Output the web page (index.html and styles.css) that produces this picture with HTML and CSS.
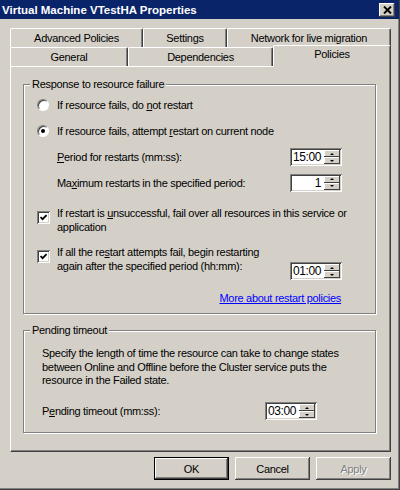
FILE: index.html
```html
<!DOCTYPE html>
<html lang="en">
<head>
    <meta charset="UTF-8">
    <title>Virtual Machine VTestHA Properties</title>
    <link rel="stylesheet" href="styles.css">
</head>
<body>

    <div class="window">
        <div class="titlebar">
            <span class="title">Virtual Machine VTestHA Properties</span>
            <span class="close">
                <svg width="9" height="8" viewBox="0 0 9 8"><path d="M1 0.5 L8 7.5 M8 0.5 L1 7.5" stroke="#000" stroke-width="1.9"/></svg>
            </span>
        </div>

        <div class="dialog">
            <!-- back row of tabs -->
            <div class="tab-row">
                <div class="tab tab-adv">Advanced Policies</div>
                <div class="tab tab-set">Settings</div>
                <div class="tab tab-net">Network for live migration</div>
            </div>
            <!-- front row, Policies selected -->
            <div class="tab-row">
                <div class="tab tab-gen">General</div>
                <div class="tab tab-dep">Dependencies</div>
                <div class="tab tab-pol active">Policies</div>
            </div>

            <div class="panel">
                <fieldset class="group">
                    <legend>Response to resource failure</legend>
                    <div class="group-body">
                        <div class="opt"><span class="radio"></span><span>If resource fails, do <u>n</u>ot restart</span></div>
                        <div class="opt"><span class="radio checked"></span><span>If resource fails, attempt <u>r</u>estart on current node</span></div>
                        <div class="field">
                            <span><u>P</u>eriod for restarts (mm:ss):</span>
                            <div class="spin"><span class="spin-val">15:00</span><span class="spin-btns"><span class="up"></span><span class="down"></span></span></div>
                        </div>
                        <div class="field short">
                            <span>Ma<u>x</u>imum restarts in the specified period:</span>
                            <div class="spin"><span class="spin-val num">1</span><span class="spin-btns"><span class="up"></span><span class="down"></span></span></div>
                        </div>
                        <div class="check">
                            <span class="box"><svg width="7" height="7" viewBox="0 0 7 7"><path d="M0.5 3 L2.6 5.2 L6.6 1" fill="none" stroke="#000" stroke-width="1.8"/></svg></span>
                            <span>If restart is <u>u</u>nsuccessful, fail over all resources in this service or<br>application</span>
                        </div>
                        <div class="check">
                            <span class="box"><svg width="7" height="7" viewBox="0 0 7 7"><path d="M0.5 3 L2.6 5.2 L6.6 1" fill="none" stroke="#000" stroke-width="1.8"/></svg></span>
                            <span class="check-text">If all the re<u>s</u>tart attempts fail, begin restarting<br>again after the specified period (hh:mm):</span>
                            <div class="spin low"><span class="spin-val">01:00</span><span class="spin-btns"><span class="up"></span><span class="down"></span></span></div>
                        </div>
                        <div class="link-row"><a href="#">More about restart policies</a></div>
                    </div>
                </fieldset>

                <fieldset class="group second">
                    <legend>Pending timeout</legend>
                    <div class="group-body pending">
                        <p class="note">Specify the length of time the resource can take to change states<br>between Online and Offline before the Cluster service puts the<br>resource in the Failed state.</p>
                        <div class="pending-row">
                            <span class="pending-label">P<u>e</u>nding timeout (mm:ss):</span>
                            <div class="spin"><span class="spin-val">03:00</span><span class="spin-btns"><span class="up"></span><span class="down"></span></span></div>
                        </div>
                    </div>
                </fieldset>
            </div>

            <div class="buttons">
                <button class="btn default">OK</button>
                <button class="btn">Cancel</button>
                <button class="btn" disabled>Apply</button>
            </div>
        </div>
    </div>

</body>
</html>
```

FILE: styles.css
```css
body {
    margin: 0;
    font-family: "Liberation Sans", Arial, sans-serif;
    font-size: 11px;
    letter-spacing: -0.3px;
    color: #000;
}
.window {
    width: 400px;
    height: 490px;
    box-sizing: border-box;
    background-color: #d4d0c8;
    border-right: 1px solid #404040;
    border-bottom: 1px solid #404040;
    box-shadow: inset -1px -1px #808080;
}
.titlebar {
    height: 19px;
    background-color: #0a246a;
    display: flex;
    align-items: center;
    justify-content: space-between;
    padding: 0 4px 0 2px;
}
.title {
    color: white;
    font-weight: bold;
    font-size: 11.5px;
    letter-spacing: 0;
}
.close {
    width: 16px;
    height: 14px;
    box-sizing: border-box;
    background-color: #d4d0c8;
    display: flex;
    align-items: center;
    justify-content: center;
    box-shadow: inset -1px -1px #404040, inset 1px 1px #fff, inset -2px -2px #808080;
}
.dialog {
    margin: 9px 0 0 10px;
    width: 381px;
}
.tab-row {
    display: flex;
    height: 19px;
}
.tab {
    box-sizing: border-box;
    height: 19px;
    border: 1px solid #fff;
    border-right-color: #404040;
    border-bottom: none;
    border-radius: 2px 2px 0 0;
    box-shadow: inset -1px 0 #808080;
    text-align: center;
    line-height: 18px;
    background-color: #d4d0c8;
}
.tab-adv { width: 133px; }
.tab-set { width: 84px; }
.tab-net { width: 164px; }
.tab-gen { width: 118px; }
.tab-dep { width: 145px; }
.tab-pol { width: 118px; }
.tab.active {
    position: relative;
    z-index: 1;
    height: 22px;
    margin-top: -2px;
    line-height: 17px;
}
.panel {
    box-sizing: border-box;
    height: 386px;
    border: 1px solid #fff;
    border-right-color: #404040;
    border-bottom-color: #404040;
    box-shadow: inset -1px -1px #808080;
    padding: 10px 14px 0 12px;
}
.group {
    margin: 0;
    padding: 0;
    border: 1px solid #808080;
    box-shadow: 1px 1px 0 #fff, inset 1px 1px 0 #fff;
}
.group legend {
    margin-left: 6px;
    padding: 0 2px;
    line-height: 14px;
    background-color: #d4d0c8;
}
.group.second {
    margin-top: 9px;
}
.group-body {
    padding: 1px 10px 8px 13px;
}
.opt {
    display: flex;
    align-items: center;
    height: 26px;
}
.radio {
    width: 12px;
    height: 12px;
    box-sizing: border-box;
    margin-right: 8px;
    border-radius: 50%;
    background-color: white;
    border: 1px solid;
    border-color: #808080 #fff #fff #808080;
    box-shadow: inset 1px 1px #404040;
    display: flex;
    align-items: center;
    justify-content: center;
}
.radio.checked::after {
    content: "";
    width: 4px;
    height: 4px;
    border-radius: 50%;
    background-color: black;
}
.field {
    display: flex;
    align-items: center;
    justify-content: space-between;
    height: 26px;
    padding-left: 20px;
    margin-right: 23px;
}
.field.short {
    height: 25px;
}
.spin {
    width: 52px;
    height: 18px;
    box-sizing: border-box;
    padding: 2px;
    display: flex;
    background-color: white;
    box-shadow: inset 1px 1px #808080, inset -1px -1px #fff, inset 2px 2px #404040, inset -2px -2px #d4d0c8;
}
.spin-val {
    flex: 1;
    line-height: 14px;
    font-size: 12px;
    letter-spacing: -0.4px;
    padding-left: 1px;
}
.spin-val.num {
    text-align: right;
    padding-right: 3px;
}
.spin-btns {
    width: 16px;
    display: flex;
    flex-direction: column;
}
.up, .down {
    flex: 1;
    background-color: #d4d0c8;
    box-shadow: inset -1px -1px #404040, inset 1px 1px #fff;
    display: flex;
    align-items: center;
    justify-content: center;
}
.up::after, .down::after {
    content: "";
    border-left: 2px solid transparent;
    border-right: 2px solid transparent;
}
.up::after { border-bottom: 2px solid #000; }
.down::after { border-top: 2px solid #000; }
.check {
    display: flex;
    align-items: flex-start;
    margin-top: 11px;
    line-height: 14px;
    white-space: nowrap;
}
.box {
    width: 13px;
    height: 13px;
    box-sizing: border-box;
    margin: 5px 7px 0 0;
    background-color: white;
    display: flex;
    align-items: center;
    justify-content: center;
    box-shadow: inset 1px 1px #808080, inset -1px -1px #fff, inset 2px 2px #404040, inset -2px -2px #d4d0c8;
}
.check-text {
    flex: 1;
}
.spin.low {
    margin: 17px 23px 0 0;
}
.link-row {
    margin: 11px 24px 0 0;
    text-align: right;
    line-height: 14px;
}
.link-row a {
    color: #0000ff;
}
.pending {
    padding: 10px 10px 11px 18px;
}
.note {
    margin: 0;
    line-height: 13.5px;
    white-space: nowrap;
}
.pending-row {
    display: flex;
    align-items: center;
    height: 19px;
    margin-top: 14px;
}
.pending-label {
    width: 223px;
}
.buttons {
    display: flex;
    justify-content: flex-end;
    gap: 6px;
    margin-top: 5px;
}
.btn {
    width: 75px;
    height: 23px;
    box-sizing: border-box;
    border: none;
    padding: 0;
    background-color: #d4d0c8;
    font: inherit;
    letter-spacing: inherit;
    color: #000;
    box-shadow: inset -1px -1px #404040, inset 1px 1px #fff, inset -2px -2px #808080, inset 2px 2px #d4d0c8;
}
.btn.default {
    border: 1px solid #000;
    box-shadow: inset -1px -1px #404040, inset 1px 1px #fff, inset -2px -2px #808080;
}
.btn:disabled {
    color: #808080;
    text-shadow: 1px 1px #fff;
}
```
